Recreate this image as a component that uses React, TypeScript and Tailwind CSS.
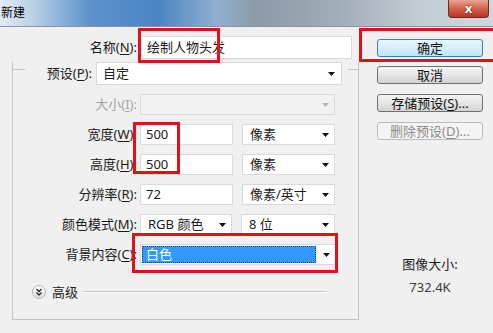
import React from 'react';

const Arrow = ({ color = '#111' }: { color?: string }) => (
  <svg width="7" height="4" viewBox="0 0 7 4" className="shrink-0">
    <path d="M0 0h7L3.5 4z" fill={color} />
  </svg>
);

const U = ({ children }: { children: React.ReactNode }) => <span className="underline underline-offset-2">{children}</span>;

const Select = ({ value, width, disabled = false }: { value?: string; width: string; disabled?: boolean }) => (
  <div
    className={`${width} h-[21px] flex items-center pl-[7px] pr-[5px] border ${
      disabled ? 'bg-[#f2f2f2] border-[#d9d9d9]' : 'bg-white border-[#dadada]'
    }`}
  >
    <span className="flex-1 leading-[19px]">{value}</span>
    <Arrow color={disabled ? '#b5b5b5' : '#111'} />
  </div>
);

const Input = ({ value, width }: { value: string; width: string }) => (
  <div className={`${width} h-[21px] flex items-center pl-[5px] bg-white border border-[#dadada]`}>
    <span className="leading-[19px]">{value}</span>
  </div>
);

const Row = ({ label, children, muted = false }: { label: React.ReactNode; children: React.ReactNode; muted?: boolean }) => (
  <div className="flex items-center h-[21px] gap-[3px]">
    <div className={`w-[124px] text-right whitespace-nowrap ${muted ? 'text-[#a3a3a3]' : ''}`}>{label}</div>
    {children}
  </div>
);

const WinButton = ({ children, kind = 'normal', className = '' }: { children: React.ReactNode; kind?: 'normal' | 'default' | 'disabled'; className?: string }) => {
  const styles = {
    normal: 'border-[#707070] bg-gradient-to-b from-[#f4f4f4] via-[#e6e6e6] to-[#d3d3d3] text-[#111]',
    default: 'border-[#3c7fb1] bg-gradient-to-b from-[#eaf6fd] via-[#d6eefb] to-[#bfe4f6] text-[#111]',
    disabled: 'border-[#b8bcbf] bg-[#f4f4f4] text-[#8c8c8c]',
  }[kind];
  return (
    <div className={`w-[106px] h-[18px] rounded-[3px] border flex items-center justify-center leading-none ${styles} ${className}`}>
      {children}
    </div>
  );
};

export default function App() {
  return (
    <div className="relative w-[493px] h-[333px] overflow-hidden bg-[#f0f0f0] text-[13px] text-[#1b1b1b] font-['Noto_Sans','Noto_Sans_CJK_SC',sans-serif]">
      {/* Title bar */}
      <div className="h-[27px] flex items-start border-b border-[#8a949e] bg-[linear-gradient(90deg,#e3ebf3_0%,#b9cfe6_7%,#5e93cc_18%,#4a84c4_32%,#8fb0d0_44%,#8c9aa7_52%,#a3afba_70%,#c3ccd4_85%,#cfd7de_100%)]">
        <span className="pl-[1px] pt-[5px] text-[12px] leading-[16px] text-black">新建</span>
        <div className="flex-1" />
        <div className="mr-[4px] w-[41px] h-[18px] rounded-b-[4px] border border-t-0 border-[#6f2a22] bg-gradient-to-b from-[#e8a493] via-[#d4614c] to-[#b93221] flex items-center justify-center">
          <span className="text-white font-bold text-[13px] leading-none [text-shadow:0_0_2px_#4a1208]">x</span>
        </div>
      </div>

      <div className="flex">
        {/* Left form */}
        <div className="w-[359px] pt-[9px]">
          <div className="flex items-center h-[23px] gap-[3px]">
            <div className="w-[137px] text-right whitespace-nowrap">名称(<U>N</U>):</div>
            <div className="w-[212px] h-[23px] flex items-center pl-[6px] bg-white border border-[#dadada]">
              <span className="leading-[19px]">绘制人物头发</span>
            </div>
          </div>

          {/* Group box */}
          <div className="ml-[12px] mt-[10px] w-[347px] border-l border-r border-b border-[#c4c4c4]">
            <div className="-mt-[7px] flex items-start h-[23px]">
              <div className="w-[12px] mt-[7px] border-t border-[#c4c4c4]" />
              <div className="w-[67px] h-[23px] flex items-center justify-end whitespace-nowrap">预设(<U>P</U>):</div>
              <div className="ml-[4px] w-[246px] h-[23px] flex items-center pl-[6px] pr-[6px] bg-white border border-[#dadada]">
                <span className="flex-1 leading-[19px]">自定</span>
                <Arrow />
              </div>
              <div className="w-[6px]" />
              <div className="flex-1 mt-[7px] border-t border-[#c4c4c4]" />
            </div>

            <div className="flex flex-col gap-[9px] pt-[9px]">
              <Row label={<>大小(<U>I</U>):</>} muted>
                <Select width="w-[195px]" disabled />
              </Row>
              <Row label={<>宽度(<U>W</U>):</>}>
                <Input value="500" width="w-[93px]" />
                <div className="w-[3px]" />
                <Select value="像素" width="w-[93px]" />
              </Row>
              <Row label={<>高度(<U>H</U>):</>}>
                <Input value="500" width="w-[93px]" />
                <div className="w-[3px]" />
                <Select value="像素" width="w-[93px]" />
              </Row>
              <Row label={<>分辨率(<U>R</U>):</>}>
                <Input value="72" width="w-[93px]" />
                <div className="w-[3px]" />
                <Select value="像素/英寸" width="w-[93px]" />
              </Row>
              <Row label={<>颜色模式(<U>M</U>):</>}>
                <Select value="RGB 颜色" width="w-[92px]" />
                <div className="w-[3px]" />
                <Select value="8 位" width="w-[94px]" />
              </Row>
              <Row label={<>背景内容(<U>C</U>):</>}>
                <div className="w-[196px] h-[21px] flex items-center pl-[1px] pr-[5px] bg-white border border-[#dadada]">
                  <div className="w-[174px] h-[17px] flex items-center pl-[4px] bg-[#3399ff] text-white outline-1 outline-dotted outline-[#1c3f66] -outline-offset-1 leading-none">
                    白色
                  </div>
                  <div className="flex-1" />
                  <Arrow />
                </div>
              </Row>
            </div>

            {/* Advanced */}
            <div className="mt-[20px] mb-[20px] flex items-center h-[14px] pl-[19px]">
              <div className="w-[14px] h-[14px] rounded-full border border-[#b9b9b9] bg-gradient-to-b from-white to-[#dcdcdc] flex items-center justify-center">
                <svg width="8" height="8" viewBox="0 0 8 8">
                  <path d="M1.5 1l2.5 2.5L6.5 1M1.5 4.5L4 7l2.5-2.5" fill="none" stroke="#333" strokeWidth="1.4" />
                </svg>
              </div>
              <span className="ml-[6px] leading-none">高级</span>
              <div className="ml-[5px] w-[244px] border-t border-[#c8c8c8] border-b border-b-white" />
            </div>
          </div>
        </div>

        {/* Right column */}
        <div className="pl-[18px] pt-[12px] flex flex-col">
          <WinButton kind="default">确定</WinButton>
          <WinButton className="mt-[9px]">取消</WinButton>
          <WinButton className="mt-[10px]">存储预设(<U>S</U>)...</WinButton>
          <WinButton kind="disabled" className="mt-[10px]">删除预设(<U>D</U>)...</WinButton>
          <div className="w-[106px] mt-[115px] flex flex-col items-center gap-[5px] leading-[18px]">
            <span>图像大小:</span>
            <span className="text-[#3a3a3a]">732.4K</span>
          </div>
        </div>
      </div>

      {/* Red annotation boxes */}
      <div className="absolute left-[138px] top-[28px] w-[82px] h-[35px] border-[3px] border-[#e3101a]" />
      <div className="absolute left-[359px] top-[28px] w-[140px] h-[34px] border-[3px] border-[#e3101a]" />
      <div className="absolute left-[133px] top-[122px] w-[47px] h-[52px] border-[3px] border-[#e3101a]" />
      <div className="absolute left-[132px] top-[233px] w-[206px] h-[40px] border-[3px] border-[#e3101a]" />
    </div>
  );
}
